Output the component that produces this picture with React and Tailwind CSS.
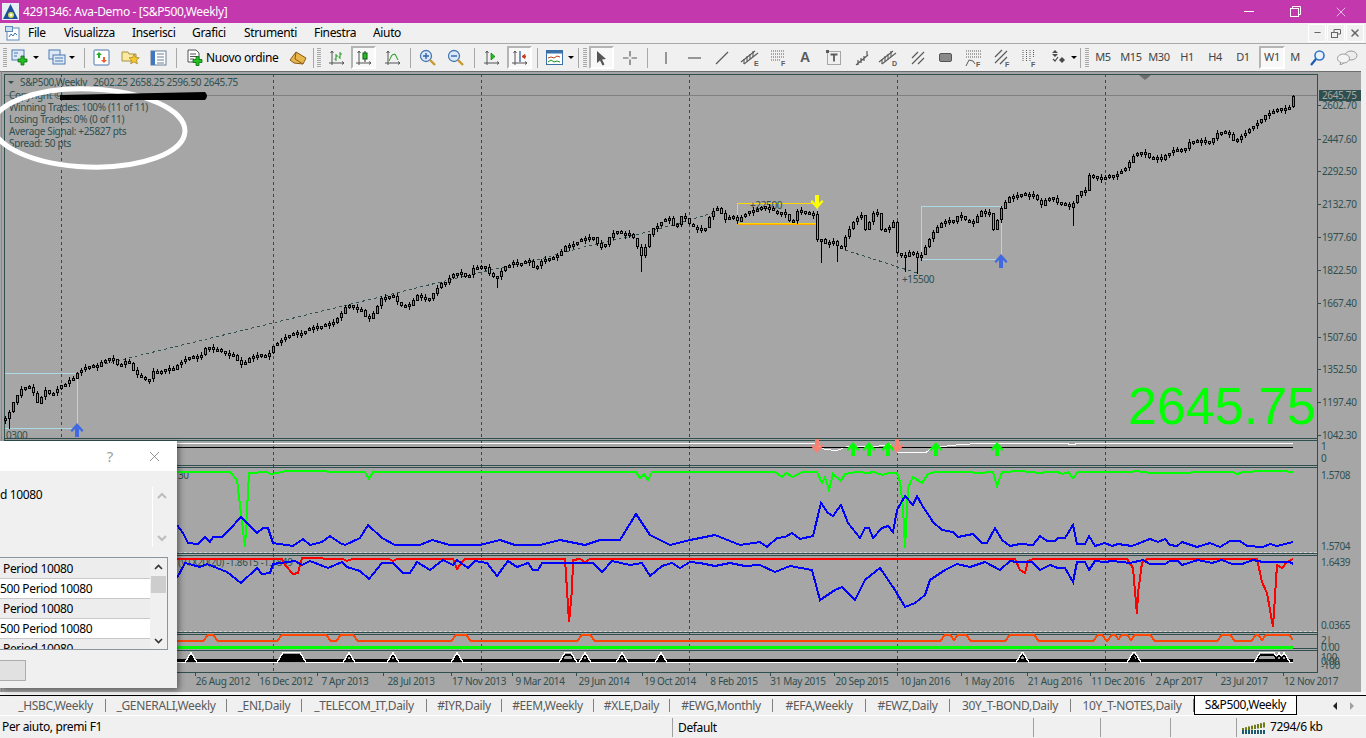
// MT4 style trading terminal window
import { X, Minus } from "lucide-react"

// weekly candles, y in screen pixels, one candle every 4px
const runs = [
  [5, [418,412,402,395,389,387,387,393,403,397,390,394,393,389,385,384,380,378,373,370,367,366,366,366,362,360,358,359,365,365,361,363,370,375,377,380,379,371,372,372,369,369,369,365,362,359,357,357,357,355,348,347,350,349,351,353,355,355,360,365,362,358,356,355,355,357,353,346,343,340,337,335,333,333,334,331,328,328,326,327,324,323,323,318,313,307,305,307,309,310,316,318,313,306,298,297,296,296,302,306,305,305,300,295,297,300,298,293,288]],
  [441, [283,282,278,274,273,273,277,275,268,267,267,267,273,277,277,271,266,265,262,263,264,261,261,267,266,261,259,258,257,255,251,246,245,245,242,239,238,238,237,243,247,244,237,233,231,234,234,234,238,247,256,247,234,228,226,222,219,218,225,225,216,218,224,227,228,231,228,217,211,208,213,220,217,217,221]],
  [741, [217,214,211,210,209,207,207,208,211,213,212,214,221,221,211,211,213,213,214,240,239,243,242,241,246,247,237,229,222,218,215,230,222,213,213,230,230,227,222,253,256,256,252,253,258,255,247,239,232,227,223,221,221,221,216,216,220,222,222,216,211,213,213,230,220,208]],
  [1005, [202,197,196,195,194,194,195,195,200,205,200,198,198,202,204,204,207,203,195,191,191,175,176,177,179,177,175,176,174,171,168,162,156,153,153,153,158,158,157,160,155,153,150,149,150,148,142,141,141,140,141,142,138,133,132,132,134,140,140,136,133,129,126,123,119,115,113,111,109,109,109,107,96]],
]

const longWicks = { 9: 429, 497: 288, 641: 272, 821: 263, 837: 262, 905: 272, 917: 274, 1073: 226 }

let seed = 7
const rnd = (n) => {
  seed = (seed * 1103 + 12345) % 65536
  return (seed >> 4) % n
}

const candles = []
let prev = 420
runs.forEach(([start, ys]) => {
  ys.forEach((y, i) => {
    const x = start + i * 4
    let top = Math.min(y, prev)
    let bottom = Math.max(y, prev)
    if (bottom - top < 3) {
      top = Math.round((top + bottom) / 2) - 1
      bottom = top + 3
    }
    if (bottom - top > 3 && bottom - top < 8) {
      bottom += rnd(2)
    }
    candles.push({
      x,
      top,
      bottom,
      up: y <= prev,
      high: top - rnd(4),
      low: longWicks[x] || bottom + rnd(4),
    })
    prev = y
  })
})

const toPoints = (pts) => pts.map((p) => p.join(",")).join(" ")
const toThin = (pts) => pts.map(([x, y]) => `${x},${y + 0.5}`).join(" ")

const greenLine = [[177,472],[230,472],[237,480],[245,547],[249,473],[267,472],[271,474],[287,471],[365,472],[369,479],[373,472],[636,472],[640,478],[644,474],[648,480],[652,472],[760,472],[775,472],[782,477],[786,473],[793,477],[802,472],[817,472],[822,483],[825,477],[829,490],[833,474],[841,481],[845,474],[857,472],[868,473],[873,472],[883,475],[888,473],[897,473],[900,482],[903,508],[905,548],[908,488],[913,477],[922,483],[928,474],[935,472],[970,472],[977,473],[993,472],[997,486],[1002,472],[1020,471],[1040,473],[1047,472],[1057,472],[1063,474],[1068,472],[1073,478],[1078,472],[1130,472],[1137,471],[1150,473],[1233,472],[1237,474],[1243,472],[1263,471],[1283,471],[1293,472]]

const bluePane3 = [[177,525],[183,533],[188,543],[198,544],[205,537],[210,542],[213,537],[222,537],[230,529],[241,517],[257,533],[263,528],[268,528],[273,543],[293,546],[303,539],[310,545],[322,542],[330,536],[340,543],[345,545],[360,538],[368,525],[382,538],[395,545],[420,545],[432,540],[450,545],[480,545],[500,540],[515,545],[540,545],[560,540],[585,545],[600,540],[620,540],[636,514],[650,535],[670,545],[690,540],[715,535],[740,545],[760,542],[767,547],[777,538],[785,537],[792,533],[800,539],[813,536],[821,503],[828,513],[833,516],[841,505],[848,523],[860,538],[865,528],[869,528],[873,538],[882,528],[888,526],[893,532],[897,510],[905,496],[913,505],[917,496],[922,505],[933,522],[942,530],[953,532],[958,537],[973,534],[982,543],[987,543],[995,528],[1002,540],[1010,546],[1020,544],[1033,545],[1040,536],[1047,541],[1055,541],[1058,538],[1065,538],[1073,525],[1077,544],[1085,544],[1089,536],[1095,546],[1105,543],[1112,546],[1118,544],[1132,546],[1150,539],[1158,542],[1165,539],[1170,545],[1177,546],[1182,542],[1197,547],[1210,543],[1220,547],[1230,541],[1240,541],[1247,546],[1263,547],[1270,544],[1277,546],[1293,542]]

const redLine = [[177,559],[282,559],[285,565],[293,574],[298,573],[302,558],[343,559],[347,561],[352,559],[389,559],[393,561],[397,559],[453,559],[457,569],[462,562],[465,559],[565,559],[567,590],[569,622],[572,590],[573,560],[580,559],[585,562],[590,559],[1015,559],[1020,570],[1025,573],[1028,561],[1033,559],[1127,559],[1133,568],[1136,603],[1137,614],[1138,593],[1142,563],[1147,559],[1257,559],[1262,582],[1267,593],[1273,627],[1277,565],[1282,568],[1287,562],[1293,559]]

const bluePane4 = [[177,578],[185,563],[200,567],[207,564],[227,572],[241,583],[257,568],[262,574],[270,573],[273,564],[295,561],[302,565],[310,561],[328,568],[342,562],[347,567],[360,571],[369,579],[382,563],[393,563],[403,573],[410,573],[417,562],[430,570],[443,560],[453,565],[457,560],[468,568],[475,561],[487,563],[497,576],[508,561],[517,567],[528,563],[533,570],[538,570],[542,563],[593,563],[602,572],[612,561],[630,565],[642,563],[650,576],[662,566],[672,563],[680,568],[690,562],[700,563],[715,566],[730,563],[745,566],[760,565],[775,572],[790,566],[812,570],[820,600],[835,590],[842,587],[855,600],[865,580],[880,568],[895,590],[905,607],[915,603],[925,595],[930,580],[945,570],[957,564],[970,567],[985,562],[1000,570],[1010,561],[1017,562],[1032,562],[1040,570],[1050,565],[1058,568],[1065,568],[1073,582],[1077,562],[1085,562],[1089,570],[1095,561],[1105,562],[1112,561],[1130,563],[1143,560],[1150,564],[1165,564],[1170,561],[1178,561],[1182,565],[1198,560],[1212,563],[1222,560],[1232,564],[1242,564],[1253,560],[1263,562],[1290,562],[1293,564]]

const whiteLine = [[177,443],[235,443],[815,443],[825,449],[837,450],[847,446],[875,446],[890,444],[898,452],[926,452],[932,447],[943,446],[960,444],[980,443],[1068,443],[1069,444],[1075,444],[1076,443],[1293,443]]

// flat topped bumps on a base level, sampled per pixel
const trapezoid = (segs, base, top, ramp) => {
  const pts = []
  for (let x = 177; x <= 1293; x++) {
    let k = 0
    segs.forEach(([a, b]) => {
      if (x >= a && x <= b) k = 1
      else if (x > a - ramp && x < a) k = Math.max(k, (x - a + ramp) / ramp)
      else if (x > b && x < b + ramp) k = Math.max(k, (b + ramp - x) / ramp)
    })
    pts.push([x, Math.round(base + (top - base) * k)])
  }
  return pts
}

const orangeSegs = [[208,213],[282,326],[341,353],[456,466],[582,590],[945,950],[958,966],[1010,1034],[1098,1102],[1112,1115],[1122,1127],[1135,1150],[1222,1230],[1256,1258],[1266,1289]]
const orangeLine = trapezoid(orangeSegs, 641, 635, 5)

const spikeSegs = [[191,191],[283,300],[349,349],[393,393],[457,457],[565,571],[585,585],[622,622],[661,661],[1022,1023],[1133,1135],[1260,1274],[1279,1279],[1284,1284]]
const spikeBlack = trapezoid(spikeSegs, 660, 655, 4)
const spikeWhite = trapezoid(spikeSegs, 662, 652, 6)

const dashes = [61, 273, 481, 689, 897, 1105]

const priceLabels = [
  ["2602.70", 105], ["2447.60", 139], ["2292.50", 171], ["2132.70", 204], ["1977.60", 237], ["1822.50", 270],
  ["1667.40", 303], ["1507.60", 337], ["1352.50", 369], ["1197.40", 402], ["1042.30", 435],
]

const subLabels = [
  ["1", 446], ["0", 458], ["1.5708", 475], ["1.5704", 546], ["1.6439", 562], ["0.0365", 625],
  ["2|", 640], ["0.00", 647], ["100", 657], ["0.00", 661], ["-100", 665],
]

const dates = [
  ["26 Aug 2012", 223], ["16 Dec 2012", 286], ["7 Apr 2013", 345], ["28 Jul 2013", 411], ["17 Nov 2013", 479],
  ["9 Mar 2014", 540], ["29 Jun 2014", 604], ["19 Oct 2014", 670], ["8 Feb 2015", 734], ["31 May 2015", 798],
  ["20 Sep 2015", 862], ["10 Jan 2016", 925], ["1 May 2016", 989], ["21 Aug 2016", 1055], ["11 Dec 2016", 1118],
  ["2 Apr 2017", 1179], ["23 Jul 2017", 1244], ["12 Nov 2017", 1311],
]

const infoLines = [
  ["Copyright ©", 99],
  ["Winning Trades: 100% (11 of 11)", 111],
  ["Losing Trades: 0% (0 of 11)", 123],
  ["Average Signal: +25827 pts", 135],
  ["Spread: 50 pts", 147],
]

const paneLines = [74, 438, 440, 465, 467, 553, 555, 632, 634, 648, 650, 672]

const Arrow = ({ x, y, color, down }) => (
  <path
    transform={down ? `translate(${x} ${y + 14}) scale(1 -1)` : `translate(${x} ${y})`}
    d="M0 0 L6.5 7.5 L5 9 L2 6 L2 14 L-2 14 L-2 6 L-5 9 L-6.5 7.5 Z"
    fill={color}
  />
)

const Chart = () => (
  <svg viewBox="0 71 1361 621" className="block w-[1361px] h-[621px]">
    <rect x="0" y="71" width="1361" height="621" fill="#a6a6a6" />
    <rect x="0" y="71" width="1361" height="1" fill="#6e6e6e" />
    <rect x="1" y="71" width="1" height="621" fill="#8a8a8a" />

    <g shapeRendering="crispEdges">
      {dashes.map((x) => (
        <line key={x} x1={x + 0.5} x2={x + 0.5} y1="74" y2="672" stroke="#2f4f4f" strokeDasharray="3 3" />
      ))}
      <line x1="4" x2="1317" y1="95.5" y2="95.5" stroke="#808080" />
      {paneLines.map((y) => (
        <line key={y} x1="4" x2="1318" y1={y + 0.5} y2={y + 0.5} stroke="#2f4f4f" />
      ))}
      <line x1="4.5" x2="4.5" y1="74" y2="672" stroke="#2f4f4f" />
      <line x1="1317.5" x2="1317.5" y1="74" y2="672" stroke="#2f4f4f" />
      <line x1="4" x2="1317" y1="552.5" y2="552.5" stroke="#d0d0d0" strokeDasharray="3 2" />
      <line x1="4" x2="1317" y1="631.5" y2="631.5" stroke="#d0d0d0" strokeDasharray="3 2" />
      {priceLabels.map(([t, y]) => (
        <line key={t} x1="1317" x2="1321" y1={y + 0.5} y2={y + 0.5} stroke="#2f4f4f" />
      ))}
      {dates.map(([t, x]) => (
        <line key={t} x1={x - 27.5} x2={x - 27.5} y1="672" y2="676" stroke="#2f4f4f" />
      ))}

      {/* zigzag and trade boxes */}
      <polyline points="88,368 100,365 133,357 273,323 380,297 473,274 500,268 537,260 580,248 623,238 643,233 680,223 716,212" fill="none" stroke="#2f4f4f" strokeDasharray="3 3" />
      <polyline points="845,250 917,273" fill="none" stroke="#2f4f4f" strokeDasharray="3 3" />
      <rect x="737.5" y="203.5" width="80" height="20" fill="none" stroke="#ffd700" />
      <line x1="737" x2="817" y1="224.5" y2="224.5" stroke="#ffa500" />
      <rect x="921.5" y="206.5" width="80" height="53" fill="none" stroke="#add8e6" />
      <polyline points="5,373.5 77.5,373.5 77.5,428.5 5,428.5" fill="none" stroke="#add8e6" />
    </g>

    <g fill="#2f4f4f" fontSize="10" fontFamily="'Noto Sans', sans-serif">
      <text x="750" y="209">+22500</text>
    </g>

    <g shapeRendering="crispEdges">
      {candles.map((c) => (
        <g key={c.x}>
          <rect x={c.x} y={c.high} width="1" height={c.low - c.high} fill="#000" />
          <rect x={c.x - 1} y={c.top} width="3" height={c.bottom - c.top} fill="#000" />
          <rect x={c.x} y={c.top + 1} width="1" height={Math.max(1, c.bottom - c.top - 2)} fill={c.up ? "#00e000" : "#ee7b62"} />
        </g>
      ))}
    </g>

    <g fill="#2f4f4f" fontSize="10" fontFamily="'Noto Sans', sans-serif">
      <text x="178" y="479">30</text>
      <text x="178" y="566">(V1X20(20) -1.8615 -1.1849</text>
    </g>

    <g shapeRendering="crispEdges">
      {/* indicator panes */}
      <polyline points={toThin(whiteLine)} fill="none" stroke="#fff" strokeWidth="1" />
      <line x1="177" x2="1293" y1="447.5" y2="447.5" stroke="#000" />
      <polyline points={toPoints(greenLine)} fill="none" stroke="#00ff00" strokeWidth="2" />
      <polyline points={toPoints(bluePane3)} fill="none" stroke="#0000ff" strokeWidth="2" />
      <polyline points={toPoints(redLine)} fill="none" stroke="#ff0000" strokeWidth="2" />
      <polyline points={toPoints(bluePane4)} fill="none" stroke="#0000ff" strokeWidth="2" />
      <polyline points={toPoints(orangeLine)} fill="none" stroke="#ff4500" strokeWidth="2" />
      <rect x="177" y="646" width="1116" height="3" fill="#00ff00" />
      <rect x="177" y="659" width="1116" height="3" fill="#000" />
      <polygon points="186,661 191,655 194,661" fill="#000" />
      <polygon points="278,661 284,655 300,655 304,661" fill="#000" />
      <polygon points="452,661 457,655 460,661" fill="#000" />
      <polygon points="655,661 661,656 666,661" fill="#000" />
      <polygon points="1127,661 1133,655 1137,661" fill="#000" />
      <polyline points={toPoints(spikeBlack)} fill="none" stroke="#000" strokeWidth="2" />
      <polyline points={toThin(spikeWhite)} fill="none" stroke="#fff" strokeWidth="1" />
    </g>

    <Arrow x={817} y={195} color="#ffff00" down />
    <Arrow x={1001} y={254} color="#4169e1" />
    <Arrow x={77} y={423} color="#4169e1" />
    <Arrow x={817} y={439} color="#fa8072" down />
    <Arrow x={897} y={439} color="#fa8072" down />
    {[853, 869, 888, 936, 997].map((x) => (
      <Arrow key={x} x={x} y={442} color="#00ff00" />
    ))}
    <polygon points="1139,75 1151,75 1145,80" fill="#6e6e6e" />
    <polygon points="8,81 14,81 11,84" fill="#2f4f4f" />

    <g fill="#2f4f4f" fontSize="10" fontFamily="'Noto Sans', sans-serif">
      <text x="20" y="86">S&amp;P500,Weekly</text>
      <text x="93" y="86">2602.25 2658.25 2596.50 2645.75</text>
      {infoLines.map(([t, y]) => (
        <text key={t} x="9" y={y}>{t}</text>
      ))}
      <text x="6" y="439">0300</text>
      <text x="902" y="283">+15500</text>
      {priceLabels.map(([t, y]) => (
        <text key={t} x="1322" y={y + 4}>{t}</text>
      ))}
      {subLabels.map(([t, y], i) => (
        <text key={i} x="1321" y={y + 4}>{t}</text>
      ))}
      {dates.map(([t, x]) => (
        <text key={t} x={x} y="685" textAnchor="middle">{t}</text>
      ))}
    </g>

    <rect x="1319" y="90" width="42" height="11" fill="#2f4f4f" />
    <text x="1322" y="99" fontSize="10" fill="#a6a6a6" fontFamily="'Noto Sans', sans-serif">2645.75</text>

    <text x="1128" y="424" fontSize="52" letterSpacing="0" fill="#00ff00" fontFamily="'Liberation Sans', sans-serif">2645.75</text>

    {/* hand drawn marks on the screenshot */}
    <ellipse cx="89" cy="128" rx="96" ry="39" fill="none" stroke="#fff" strokeWidth="5" transform="rotate(2 89 128)" />
    <path d="M60 95 L205 92 Q209 96 205 100 L60 100 Z" fill="#000" />
  </svg>
)

const Grip = () => (
  <div className="flex flex-col gap-px w-[4px] h-[20px] overflow-hidden">
    {[0, 1, 2, 3, 4, 5, 6, 7, 8, 9].map((i) => (
      <span key={i} className="block h-px w-[4px] bg-[#a8a8a8]" />
    ))}
  </div>
)

const Slot = ({ className = "", active, children }) => (
  <div
    className={`h-[23px] flex items-center justify-center shrink-0 ${className} ${
      active ? "bg-[#f8f8f8] border-2 border-t-[#b4b4b4] border-l-[#b4b4b4] border-r-white border-b-white" : ""
    }`}
  >
    {children}
  </div>
)

const Sep = ({ className = "" }) => (
  <div className={`h-[23px] flex items-center justify-center shrink-0 ${className}`}>
    <span className="block w-px h-[20px] bg-[#a8a8a8]" />
  </div>
)

const Caret = ({ className = "" }) => (
  <div className={`h-[23px] flex items-center justify-center shrink-0 ${className}`}>
    <span className="block w-0 h-0 border-l-[3px] border-r-[3px] border-t-[3px] border-l-transparent border-r-transparent border-t-black" />
  </div>
)

const Ico = ({ w = 18, h = 18, children }) => (
  <svg width={w} height={h} viewBox={`0 0 ${w} ${h}`} fill="none">
    {children}
  </svg>
)

const GreenPlus = ({ x = 9, y = 9 }) => (
  <path
    transform={`translate(${x} ${y})`}
    d="M3 0.5h3v3h3v3H6v3H3v-3H0v-3h3z"
    fill="#22c022"
    stroke="#0c6a0c"
    strokeWidth="0.8"
  />
)

const Axes = () => (
  <path d="M3 1v14M0 13h15M1.5 3L3 1l1.5 2M13 11.5l2 1.5-2 1.5" stroke="#555" strokeWidth="1" />
)

const Gray = ({ children, w = 18, h = 18 }) => (
  <Ico w={w} h={h}>
    <g stroke="#5a5a5a" strokeWidth="1.2" fill="none">{children}</g>
  </Ico>
)

const ChannelSmall = ({ letter }) => (
  <svg width="20" height="18" viewBox="0 0 20 18" fill="none">
    <g stroke="#5a5a5a" strokeWidth="1.1">
      <path d="M1 13L15 2M4 15L18 4" />
      <path d="M4 10v5M7 7v5M10 5v5M13 2v6" />
    </g>
    <text x="14" y="17" fontSize="7" fontWeight="700" fill="#5a5a5a" fontFamily="'Liberation Sans', sans-serif">{letter}</text>
  </svg>
)

const Toolbar = () => (
  <div className="flex items-center h-[28px] border-t border-t-[#a8a8a8] bg-[#f0f0f0]">
    <div className="w-[8px] pl-[3px] shrink-0"><Grip /></div>
    <Slot className="w-[23px]">
      <Ico>
        <rect x="1" y="1" width="12" height="10" fill="#dfe9f5" stroke="#4a78b0" />
        <path d="M3 4h4M3 7h3" stroke="#4a78b0" />
        <GreenPlus x={7} y={6.5} />
      </Ico>
    </Slot>
    <Caret className="w-[9px]" />
    <Slot className="w-[23px] ml-[5px]">
      <Ico>
        <rect x="1" y="1" width="11" height="9" fill="#dfe9f5" stroke="#4a78b0" />
        <rect x="5" y="6" width="12" height="9" fill="#dfe9f5" stroke="#4a78b0" />
        <path d="M7 9h8M7 12h8" stroke="#4a78b0" />
      </Ico>
    </Slot>
    <Caret className="w-[8px]" />
    <Sep className="w-[16px]" />
    <Slot className="w-[19px]">
      <Ico w={17} h={17}>
        <rect x="1" y="1" width="15" height="15" rx="1" fill="#fff" stroke="#4a78b0" />
        <path d="M6 3l3 3H7v3H5V6H3z" fill="#22b022" />
        <path d="M11 14l3-3h-2V8h-2v3H8z" fill="#e8602c" />
      </Ico>
    </Slot>
    <Slot className="w-[38px]">
      <Ico w={19} h={18}>
        <path d="M1 3h6l1 2h7v7H1z" fill="#fbe9a0" stroke="#a8923c" />
        <path d="M13 5l1.6 3.4 3.6.4-2.7 2.4.8 3.6-3.3-1.9-3.3 1.9.8-3.6L8.1 8.8l3.6-.4z" fill="#f5c92e" stroke="#a8842c" strokeWidth="0.8" />
      </Ico>
    </Slot>
    <Slot className="w-[18px]">
      <Ico w={17} h={16}>
        <rect x="1" y="1" width="15" height="14" fill="#fff" stroke="#6a7f98" />
        <rect x="1" y="1" width="4" height="14" fill="#3d78c0" />
        <path d="M7 4h7M7 7h7M7 10h7M7 13h7" stroke="#6a7f98" />
      </Ico>
    </Slot>
    <Sep className="w-[18px]" />
    <Slot className="w-[20px]">
      <Ico>
        <path d="M2 1h8l3 3v9H2z" fill="#fff" stroke="#555" />
        <path d="M4 5h6M4 7.5h7M4 10h4" stroke="#555" />
        <GreenPlus x={7} y={7} />
      </Ico>
    </Slot>
    <span className="w-[74px] ml-[1px] shrink-0 text-[12px] leading-[20px] text-black whitespace-nowrap">Nuovo ordine</span>
    <Slot className="w-[28px] ml-[4px]">
      <Ico w={18} h={16}>
        <path d="M1 10L7 2l10 6-3 6-9-1z" fill="#e8b74a" stroke="#8a5a1c" />
        <path d="M7 2l-1 7 8 5" stroke="#8a5a1c" />
      </Ico>
    </Slot>
    <Sep className="w-[3px]" />
    <div className="w-[8px] pl-[2px] shrink-0"><Grip /></div>

    <Slot className="w-[28px]">
      <Ico w={16} h={16}>
        <Axes />
        <path d="M7 4v7M5.5 9H7M7 6h2M11 2v7M9.5 7H11M11 4h2" stroke="#1a9a1a" />
      </Ico>
    </Slot>
    <Slot active className="w-[25px]">
      <Ico w={16} h={16}>
        <Axes />
        <path d="M9 1v11" stroke="#333" />
        <rect x="7" y="3" width="4" height="6" fill="#22c022" stroke="#0a5a0a" />
      </Ico>
    </Slot>
    <Slot className="w-[25px] ml-[4px]">
      <Ico w={16} h={16}>
        <Axes />
        <path d="M4 11l3-6 3-1 3 6" stroke="#1a9a1a" />
      </Ico>
    </Slot>
    <Sep className="w-[10px]" />
    <Slot className="w-[25px]">
      <Ico>
        <circle cx="7" cy="7" r="5.5" fill="#dbeafa" stroke="#4a78b0" strokeWidth="1.3" />
        <path d="M4 7h6M7 4v6" stroke="#2f62a8" strokeWidth="1.4" />
        <path d="M11 11l5 5" stroke="#c89a2c" strokeWidth="2.4" />
      </Ico>
    </Slot>
    <Slot className="w-[25px] ml-[3px]">
      <Ico>
        <circle cx="7" cy="7" r="5.5" fill="#dbeafa" stroke="#4a78b0" strokeWidth="1.3" />
        <path d="M4 7h6" stroke="#2f62a8" strokeWidth="1.4" />
        <path d="M11 11l5 5" stroke="#c89a2c" strokeWidth="2.4" />
      </Ico>
    </Slot>
    <Sep className="w-[12px]" />
    <Slot className="w-[24px]">
      <Ico w={16} h={16}>
        <Axes />
        <path d="M7 3l4 3.5L7 10z" fill="#22c022" stroke="#0a7a0a" strokeWidth="0.7" />
      </Ico>
    </Slot>
    <Slot active className="w-[25px] ml-[3px]">
      <Ico w={16} h={16}>
        <Axes />
        <path d="M8 1v11" stroke="#2f62a8" strokeWidth="1.3" />
        <path d="M14 6.5h-3M10 6.5l3-2v4z" fill="#c83c1c" stroke="#c83c1c" />
      </Ico>
    </Slot>
    <Sep className="w-[10px]" />
    <Slot className="w-[25px]">
      <Ico w={17} h={15}>
        <rect x="0.5" y="0.5" width="16" height="14" fill="#fff" stroke="#3a6fa8" />
        <rect x="0.5" y="0.5" width="16" height="3" fill="#3a6fa8" />
        <path d="M2 8l3-1 3 1 3-2 3 1" stroke="#b84020" />
        <path d="M2 12l3-2 3 2 3-1 3 1" stroke="#1a9a1a" />
      </Ico>
    </Slot>
    <Caret className="w-[8px]" />
    <Sep className="w-[6px]" />
    <div className="w-[8px] pl-[2px] shrink-0"><Grip /></div>

    <Slot active className="w-[25px]">
      <Ico w={12} h={16}>
        <path d="M1 1l9 8-4 .5 2.5 5-2 1-2.5-5L1 13z" fill="#555" />
      </Ico>
    </Slot>
    <Slot className="w-[25px] ml-[3px]">
      <Gray w={16} h={16}><path d="M8 1v5.5M8 9.500V15M1 8h5.500M9.500 8H15" /></Gray>
    </Slot>
    <Sep className="w-[10px]" />
    <Slot className="w-[27px]"><Gray w={4} h={14}><path d="M2 1v12" /></Gray></Slot>
    <Slot className="w-[30px]"><Gray w={13} h={4}><path d="M0 2h13" /></Gray></Slot>
    <Slot className="w-[26px]"><Gray w={14} h={14}><path d="M1 13L13 1" /></Gray></Slot>
    <Slot className="w-[30px]"><ChannelSmall letter="E" /></Slot>
    <Slot className="w-[26px]">
      <svg width="17" height="17" viewBox="0 0 17 17" fill="none">
        <path d="M1 2h13M1 5h13M1 8h13M1 11h10" stroke="#5a5a5a" strokeDasharray="1 1" />
        <text x="11" y="16.5" fontSize="7" fontWeight="700" fill="#5a5a5a" fontFamily="'Liberation Sans', sans-serif">F</text>
      </svg>
    </Slot>
    <Slot className="w-[28px]">
      <span className="text-[14px] font-bold text-[#5a5a5a] [font-family:'Liberation_Sans',sans-serif]">A</span>
    </Slot>
    <Slot className="w-[30px]">
      <Ico w={16} h={16}>
        <rect x="1.5" y="1.5" width="13" height="13" stroke="#5a5a5a" strokeDasharray="1 1" />
        <rect x="0" y="0" width="3" height="3" fill="#5a5a5a" />
        <path d="M4.5 4.5h7M8 4.5v7" stroke="#5a5a5a" strokeWidth="1.8" />
      </Ico>
    </Slot>
    <Slot className="w-[26px]">
      <Gray w={14} h={16}><path d="M1 15L13 5M3 10v5M6 8v5M9 6v5M12 1v5" /></Gray>
    </Slot>
    <Slot className="w-[26px]"><ChannelSmall letter="D" /></Slot>
    <Slot className="w-[34px]">
      <Gray w={14} h={14}><path d="M1 7L7 1M1 13L13 1M7 13l6-6" /></Gray>
    </Slot>
    <Slot className="w-[20px]">
      <Ico w={13} h={10}>
        <rect x="0.5" y="0.5" width="12" height="8" rx="1.5" fill="#8a8a8a" stroke="#555" />
      </Ico>
    </Slot>
    <Slot className="w-[36px]">
      <svg width="17" height="18" viewBox="0 0 17 18" fill="none">
        <path d="M1 2h15M1 5h15M1 8h15" stroke="#5a5a5a" strokeDasharray="1 1" />
        <path d="M1 17l3-6 4 1 2 3" stroke="#5a5a5a" />
        <text x="11" y="17.5" fontSize="7" fontWeight="700" fill="#5a5a5a" fontFamily="'Liberation Sans', sans-serif">F</text>
      </svg>
    </Slot>
    <Slot className="w-[22px]">
      <svg width="16" height="18" viewBox="0 0 16 18" fill="none">
        <path d="M1 8L8 1M1 14L13 2M6 15l7-7" stroke="#5a5a5a" strokeWidth="1.2" />
        <text x="11" y="17.5" fontSize="7" fontWeight="700" fill="#5a5a5a" fontFamily="'Liberation Sans', sans-serif">F</text>
      </svg>
    </Slot>
    <Slot className="w-[32px]">
      <svg width="15" height="18" viewBox="0 0 15 18" fill="none">
        <path d="M1 1v12M4.500 1v12M8 1v12M11.500 1v7" stroke="#5a5a5a" strokeDasharray="1 1" />
        <text x="9" y="17.500" fontSize="7" fontWeight="700" fill="#5a5a5a" fontFamily="'Liberation Sans', sans-serif">F</text>
      </svg>
    </Slot>
    <Slot className="w-[26px]">
      <Ico w={15} h={15}>
        <path d="M4 0l3 3H1zM4 7L1 4h6z" fill="#4a4a4a" />
        <path d="M2 9l2 2 3-4" stroke="#4a4a4a" strokeWidth="1.2" />
        <path d="M11 7l3 3-3 3-3-3z" fill="#4a4a4a" />
      </Ico>
    </Slot>
    <Caret className="w-[6px]" />
    <Sep className="w-[6px]" />
    <div className="w-[8px] pl-[2px] shrink-0"><Grip /></div>

    {[
      ["M5", "w-[24px]"], ["M15", "w-[32px]"], ["M30", "w-[24px]"], ["H1", "w-[32px]"], ["H4", "w-[24px]"], ["D1", "w-[32px]"],
    ].map(([t, w]) => (
      <Slot key={t} className={w}>
        <span className="text-[11px] text-[#444]">{t}</span>
      </Slot>
    ))}
    <Slot active className="w-[26px]"><span className="text-[11px] text-[#444]">W1</span></Slot>
    <Slot className="w-[20px]"><span className="text-[11px] text-[#444]">M</span></Slot>
    <Slot className="w-[24px]">
      <Ico w={15} h={16}>
        <circle cx="9.500" cy="5.500" r="4.500" fill="#e8f2fc" stroke="#2f74c8" strokeWidth="1.6" />
        <path d="M6 9l-5 6" stroke="#1c5cb0" strokeWidth="2.2" />
      </Ico>
    </Slot>
    <Slot className="w-[36px]">
      <Ico w={21} h={15}>
        <ellipse cx="14" cy="5.500" rx="6" ry="4.500" fill="#ececec" stroke="#9a9a9a" />
        <ellipse cx="6.500" cy="8.500" rx="6" ry="4.500" fill="#f4f4f4" stroke="#9a9a9a" />
        <path d="M4 12l-1 3 4-2" fill="#f4f4f4" stroke="#9a9a9a" />
      </Ico>
    </Slot>
  </div>
)

const tabs = [
  ["_HSBC,Weekly", "w-[100px] ml-[6px]"],
  ["_GENERALI,Weekly", "w-[121px]"],
  ["_ENI,Daily", "w-[75px]"],
  ["_TELECOM_IT,Daily", "w-[125px]"],
  ["#IYR,Daily", "w-[75px]"],
  ["#EEM,Weekly", "w-[92px]"],
  ["#XLE,Daily", "w-[76px]"],
  ["#EWG,Monthly", "w-[103px]"],
  ["#EFA,Weekly", "w-[93px]"],
  ["#EWZ,Daily", "w-[84px]"],
  ["30Y_T-BOND,Daily", "w-[121px]"],
  ["10Y_T-NOTES,Daily", "w-[123px]"],
]

const Dialog = () => (
  <div className="absolute left-0 top-[370px] w-[177px] h-[247px] bg-[#f0f0f0] shadow-[2px_2px_6px_rgba(0,0,0,0.45)] overflow-hidden flex flex-col text-[12px] text-black">
    <div className="h-[30px] bg-white flex items-center justify-end shrink-0">
      <span className="text-[15px] text-[#a0a0a0] mr-[33px]">?</span>
      <X size={17} strokeWidth={1} className="text-[#6a6a6a] mr-[14px]" />
    </div>
    <div className="flex h-[60px] mt-[16px] shrink-0">
      <span className="w-[152px] leading-[14px] pt-[1px]">d 10080</span>
      <div className="w-[18px] border-l border-l-white flex flex-col items-center justify-between py-[5px]">
        <svg width="10" height="7" viewBox="0 0 10 7" fill="none"><path d="M1 6l4-4 4 4" stroke="#bdbdbd" strokeWidth="2" /></svg>
        <svg width="10" height="7" viewBox="0 0 10 7" fill="none"><path d="M1 1l4 4 4-4" stroke="#bdbdbd" strokeWidth="2" /></svg>
      </div>
    </div>
    <div className="w-[168px] h-[93px] mt-[10px] border border-[#8a959e] border-l-0 flex overflow-hidden shrink-0">
      <div className="w-[150px] shrink-0 pt-px">
        {[
          ["Period 10080", "pl-[3px] bg-[#ededed]"],
          ["500 Period 10080", "bg-white"],
          ["Period 10080", "pl-[3px] bg-[#ededed]"],
          ["500 Period 10080", "bg-white"],
          ["Period 10080", "pl-[3px] bg-[#ededed]"],
        ].map(([t, c], i) => (
          <div key={i} className={`h-[20px] leading-[19px] border-b border-b-[#c8c8c8] whitespace-nowrap ${c}`}>{t}</div>
        ))}
      </div>
      <div className="w-[17px] bg-[#f0f0f0] flex flex-col items-center shrink-0">
        <svg className="mt-[6px]" width="9" height="6" viewBox="0 0 9 6" fill="none"><path d="M1 5l3.500-3.500L8 5" stroke="#333" strokeWidth="1.600" /></svg>
        <span className="block w-[15px] h-[17px] mt-[6px] bg-[#cdcdcd]" />
        <svg className="mt-[45px]" width="9" height="6" viewBox="0 0 9 6" fill="none"><path d="M1 1l3.500 3.500L8 1" stroke="#333" strokeWidth="1.600" /></svg>
      </div>
    </div>
    <div className="w-[26px] h-[21px] mt-[10px] bg-[#e1e1e1] border border-[#adadad] border-l-0 shrink-0" />
  </div>
)

export default function App() {
  return (
    <div className="w-[1366px] h-[738px] overflow-hidden flex flex-col bg-[#f0f0f0] tracking-[-0.35px] [font-family:'Noto_Sans',sans-serif]">
      {/* Title bar */}
      <div className="h-[23px] bg-[#c438ae] flex items-center shrink-0">
        <svg className="ml-[2px]" width="17" height="17" viewBox="0 0 17 17">
          <rect width="17" height="17" fill="#e8eef6" />
          <path d="M8.500 1L16 16H1z" fill="#1c4e9c" />
          <circle cx="9" cy="12" r="3" fill="#c8d84a" />
          <circle cx="9" cy="12" r="1.500" fill="#fff" />
        </svg>
        <span className="ml-[4px] text-[12px] text-white whitespace-nowrap">4291346: Ava-Demo - [S&amp;P500,Weekly]</span>
        <div className="ml-auto mr-[2px] flex items-center text-white">
          <div className="w-[46px] flex justify-center"><span className="block w-[10px] h-px bg-white" /></div>
          <div className="w-[46px] flex justify-center">
            <svg width="11" height="11" viewBox="0 0 11 11" fill="none" stroke="#fff">
              <rect x="0.500" y="2.500" width="8" height="8" />
              <path d="M2.500 2.500v-2h8v8h-2" />
            </svg>
          </div>
          <div className="w-[46px] flex justify-center"><X size={16} strokeWidth={1} /></div>
        </div>
      </div>

      {/* Menu bar */}
      <div className="h-[20px] flex items-center bg-[#f0f0f0] text-[12px] text-black shrink-0">
        <svg className="ml-[5px] mr-[8px]" width="15" height="15" viewBox="0 0 15 15" fill="none">
          <rect x="2" y="2" width="12" height="12" fill="#fff" stroke="#5a88b8" />
          <rect x="0.500" y="0.500" width="7" height="5" fill="#cfe0f2" stroke="#5a88b8" />
          <path d="M4 11l2-3 2 2 2-3 2 2" stroke="#3a78b8" />
        </svg>
        {[
          ["File", "w-[36px]"], ["Visualizza", "w-[68px]"], ["Inserisci", "w-[60px]"], ["Grafici", "w-[52px]"],
          ["Strumenti", "w-[70px]"], ["Finestra", "w-[59px]"], ["Aiuto", "w-[40px]"],
        ].map(([t, w]) => (
          <span key={t} className={w}>{t}</span>
        ))}
        <div className="ml-auto mr-[2px] flex gap-px">
          <div className="w-[18px] h-[18px] border border-white flex items-end justify-center pb-[4px]"><Minus size={9} strokeWidth={3} className="text-[#666]" /></div>
          <div className="w-[18px] h-[18px] border border-white flex items-center justify-center">
            <svg width="10" height="9" viewBox="0 0 10 9" fill="none" stroke="#666"><rect x="0.500" y="3.500" width="6" height="5" /><path d="M3 3V0.500h6.500V5H7" /></svg>
          </div>
          <div className="w-[18px] h-[18px] border border-white flex items-center justify-center"><X size={12} strokeWidth={3} className="text-[#666]" /></div>
        </div>
      </div>

      <Toolbar />

      {/* Chart window */}
      <div className="relative h-[621px] shrink-0 flex">
        <Chart />
        <Dialog />
      </div>
      <div className="h-[3px] bg-[#f8f8f8] shrink-0" />

      {/* Chart tabs */}
      <div className="h-[20px] border-t border-t-black flex items-center text-[12px] text-[#5a5a5a] shrink-0">
        {tabs.map(([t, c]) => (
          <div key={t} className={`${c} h-[13px] flex items-center justify-center border-r border-r-[#808080] whitespace-nowrap shrink-0`}>{t}</div>
        ))}
        <div className="w-[103px] h-[19px] self-start bg-white border-x border-b border-black flex items-center justify-center text-black whitespace-nowrap shrink-0">S&amp;P500,Weekly</div>
        <div className="ml-[36px] flex gap-[13px] items-center">
          <span className="block w-0 h-0 border-y-[4px] border-r-[4px] border-y-transparent border-r-[#222]" />
          <span className="block w-0 h-0 border-y-[4px] border-l-[4px] border-y-transparent border-l-[#a0a0a0]" />
        </div>
      </div>
      <div className="h-px bg-white shrink-0" />

      {/* Status bar */}
      <div className="flex-1 flex items-center text-[12px] text-black bg-[#f0f0f0]">
        <span className="w-[672px] pl-[2px] shrink-0">Per aiuto, premi F1</span>
        <div className="w-[361px] h-[19px] border-l border-l-[#a0a0a0] pl-[5px] leading-[19px] shrink-0">Default</div>
        <div className="w-[67px] h-[19px] border-l border-l-[#a0a0a0] shrink-0" />
        <div className="w-[70px] h-[19px] border-l border-l-[#a0a0a0] shrink-0" />
        <div className="w-[66px] h-[19px] border-l border-l-[#a0a0a0] shrink-0" />
        <div className="h-[19px] border-l border-l-[#a0a0a0] flex items-center pl-[5px] whitespace-nowrap">
          <svg className="mr-[4px]" width="24" height="13" viewBox="0 0 24 13">
            {[0, 1, 2, 3, 4, 5, 6, 7].map((i) => (
              <g key={i}>
                <rect x={i * 3} y={7 - i * 0.8} width="2" height={3 + i * 0.3} fill="#6e7c12" />
                <rect x={i * 3} y="9" width="2" height="4" fill="#1d5a70" />
              </g>
            ))}
          </svg>
          7294/6 kb
        </div>
      </div>
    </div>
  )
}
